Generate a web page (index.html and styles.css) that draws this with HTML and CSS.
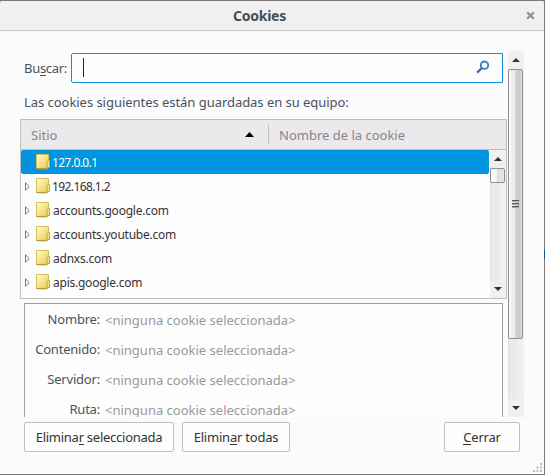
FILE: index.html
```
<!DOCTYPE html>
<html lang="es">
<head>
<meta charset="utf-8">
<title>Cookies</title>
<link rel="stylesheet" href="styles.css">
</head>
<body>
<svg width="0" height="0" class="defs">
  <defs>
    <linearGradient id="gold" x1="0" y1="0" x2="1" y2="1"><stop offset="0" stop-color="#fff9c8"/><stop offset=".5" stop-color="#f5e68e"/><stop offset="1" stop-color="#e3c650"/></linearGradient>
    <symbol id="folder" viewBox="0 0 15 17">
      <path d="M2 16.2H12" stroke="#bbb" stroke-opacity=".5"/>
      <path d="M11 7.500H13.500V14.500H11Z" fill="#f3df83" stroke="#c9aa3c"/>
      <path d="M.5 1.500H12.500V7L10.500 9V15.500H.5Z" fill="url(#gold)" stroke="#d6bd58"/>
      <path d="M.5 15.500H11.500" stroke="#b59a36"/>
    </symbol>
    <symbol id="twisty" viewBox="0 0 5 9"><path d="M.5 .8L4.300 4.500L.5 8.200Z" fill="none" stroke="currentColor"/></symbol>
  </defs>
</svg>
<div class="window">
  <header class="titlebar"><h1>Cookies</h1>
    <svg class="close" width="9" height="9" viewBox="0 0 9 9"><path d="M1.200 1.200L7.800 7.800M7.800 1.200L1.200 7.800" stroke="#8a929d" stroke-width="2.300"/></svg>
  </header>
  <main class="scroller">
    <div class="content">
      <div class="search"><label>Bu<u>s</u>car:</label>
        <div class="field"><i class="caret"></i>
          <svg width="14" height="14" viewBox="0 0 14 14"><circle cx="8.500" cy="5.200" r="3.700" fill="none" stroke="#3b82bb" stroke-width="1.900"/><path d="M5.800 8L1.200 12.600" stroke="#3c6eae" stroke-width="2.300"/></svg>
        </div>
      </div>
      <p class="intro">Las cookies siguientes están guardadas en su equipo:</p>
      <section class="list">
        <div class="head"><div class="col site"><span>Sitio</span><svg width="9" height="5" viewBox="0 0 9 5"><path d="M0 5L4.500 0L9 5Z"/></svg></div><div class="col name"><span>Nombre de la cookie</span></div></div>
        <div class="listbody">
          <div class="rows">
            <div class="row selected"><svg class="tw"><use href="#twisty"/></svg><svg class="fo"><use href="#folder"/></svg><span class="ip">127.0.0.1</span></div>
            <div class="row"><svg class="tw"><use href="#twisty"/></svg><svg class="fo"><use href="#folder"/></svg><span class="ip">192.168.1.2</span></div>
            <div class="row"><svg class="tw"><use href="#twisty"/></svg><svg class="fo"><use href="#folder"/></svg><span>accounts.google.com</span></div>
            <div class="row"><svg class="tw"><use href="#twisty"/></svg><svg class="fo"><use href="#folder"/></svg><span>accounts.youtube.com</span></div>
            <div class="row"><svg class="tw"><use href="#twisty"/></svg><svg class="fo"><use href="#folder"/></svg><span>adnxs.com</span></div>
            <div class="row"><svg class="tw"><use href="#twisty"/></svg><svg class="fo"><use href="#folder"/></svg><span>apis.google.com</span></div>
          </div>
          <div class="scrollbar inner"><div class="arrow"><svg width="8" height="4" viewBox="0 0 8 4"><path d="M0 4L4 0L8 4Z" fill="#333"/></svg></div><div class="thumb"></div><div class="track"></div><div class="arrow"><svg width="8" height="4" viewBox="0 0 8 4"><path d="M0 0L4 4L8 0Z" fill="#333"/></svg></div></div>
        </div>
      </section>
      <section class="details">
        <b>Nombre:</b><span>&lt;ninguna cookie seleccionada&gt;</span>
        <b>Contenido:</b><span>&lt;ninguna cookie seleccionada&gt;</span>
        <b>Servidor:</b><span>&lt;ninguna cookie seleccionada&gt;</span>
        <b>Ruta:</b><span>&lt;ninguna cookie seleccionada&gt;</span>
      </section>
    </div>
    <div class="scrollbar outer"><div class="arrow"><svg width="8" height="4" viewBox="0 0 8 4"><path d="M0 4L4 0L8 4Z" fill="#333"/></svg></div><div class="thumb"><i></i><i></i><i></i></div><div class="track"></div><div class="arrow"><svg width="8" height="4" viewBox="0 0 8 4"><path d="M0 0L4 4L8 0Z" fill="#333"/></svg></div></div>
  </main>
  <footer class="actions">
    <button class="b1"><span>Elimina<u>r</u> seleccionada</span></button><button class="b2"><span>Elimin<u>a</u>r todas</span></button><button class="b3"><span><u>C</u>errar</span></button>
  </footer>
  <svg class="grip" width="10" height="10" viewBox="0 0 10 10" fill="#bbb"><path d="M7 0h2v2H7zM7 3.500h2v2H7zM7 7h2v2H7zM3.500 3.500h2v2h-2zM3.500 7h2v2h-2zM0 7h2v2H0z"/></svg>
</div>
<i class="edge"></i>
</body>
</html>
```
FILE: styles.css
```
* { box-sizing: border-box; }
body { margin: 0; background: #777; font: 13px/20px "Noto Sans", "Open Sans", sans-serif; color: #4a5260; }
svg { display: block; flex: none; }
.defs { position: absolute; }
span, label, p, b, h1 { white-space: nowrap; }
u { text-decoration: none; box-shadow: inset 0 -1px currentColor; display: inline-block; line-height: 16px; }
.window { position: relative; width: 545px; height: 475px; border: solid #7d7a7c; border-width: 1px 1px 1px 0; border-radius: 3px 3px 0 0; background: #fbfbfb; display: flex; flex-direction: column; overflow: hidden; }
.titlebar { height: 30px; flex: none; background: #f0f0f0; border-bottom: 1px solid #c4c4c4; display: flex; align-items: center; padding: 0 9px 0 233px; justify-content: space-between; }
h1 { margin: 0; font-size: 14px; line-height: 20px; letter-spacing: -.25px; color: #464c5c; }
.scroller { margin: 20px 20px 0; height: 366px; display: flex; overflow: hidden; }
.content { width: 488px; flex: none; padding-top: 2px; }
.search { display: flex; align-items: center; padding-left: 4px; height: 30px; }
.search label { width: 47px; letter-spacing: -.3px; }
.field { width: 432px; height: 30px; background: #fdfdfd; border: 1px solid #0f91dc; border-radius: 2px 0 0 2px; display: flex; align-items: center; justify-content: space-between; padding: 0 12px 2px 11px; }
.caret { width: 1px; height: 19px; background: #222; }
.intro { margin: 9px 0 7px 4px; height: 20px; letter-spacing: -.04px; }
.list { width: 487px; height: 180px; border: 1px solid #bebebe; background: #fdfdfd; }
.head { height: 30px; background: #ebe9eb; border-bottom: 1px solid #bebebe; display: flex; align-items: center; color: #85868b; }
.head span { margin-top: 1px; }
.col { display: flex; align-items: center; height: 19px; }
.site { width: 248px; border-right: 1px solid #bebebe; justify-content: space-between; padding: 0 14px 0 10px; }
.site svg { fill: #000; }
.name { padding-left: 10px; }
.listbody { display: flex; height: 148px; }
.rows { width: 468px; margin-right: 1px; }
.row { height: 24px; display: flex; align-items: center; padding-left: 4px; font-size: 12px; letter-spacing: -.24px; color: #333; border-radius: 2px; }
.row span { margin-top: 2px; }
.selected { background: #0095de; color: #fff; }
.tw { width: 5px; height: 9px; margin: 1px 6px 0 0; color: #777; }
.selected .tw { color: #4d6f86; }
.fo { width: 15px; height: 17px; margin: -2px 2px 0 0; }
.row .ip { letter-spacing: -.6px; margin-left: -1px; }
.scrollbar { display: flex; flex-direction: column; flex: none; width: 16px; background: linear-gradient(90deg, #e2e2e2, #ececec 20%, #e8e8e8 48%, #f4f4f4 50%, #ededed 54%, #f3f3f3); }
.arrow { height: 18px; display: flex; justify-content: center; align-items: center; flex: none; background: #f0f0f0; }
.thumb { width: 15px; border: 1px solid #8f8f8f; border-radius: 2px; background: linear-gradient(90deg, #fdf8f7 0 15%, #ececed 20% 42%, #d2d2d8 50%, #c7c7cd 80%, #ddd); display: flex; flex-direction: column; align-items: center; justify-content: center; gap: 1px; }
.thumb i { width: 7px; height: 2px; background: #555; border-bottom: 1px solid #aaa; }
.inner .thumb { height: 15px; background: linear-gradient(90deg, #fafafa 0 40%, #dcdce2 50%, #e6e6ea); }
.outer .thumb { height: 270px; }
.track { flex: 1; }
.details { margin: 4px 0 0 4px; width: 479px; height: 130px; border: 1px solid #a0a0a0; background: #fdfdfd; display: grid; grid-template-columns: 75px auto; grid-auto-rows: 30px; column-gap: 5px; padding-top: 6px; justify-content: start; }
.details b { font-weight: 400; justify-self: end; letter-spacing: -.2px; line-height: 19px; }
.details span { color: #999; line-height: 20px; }
.actions { display: flex; margin: 5px 24px 0; }
button { height: 30px; padding: 0; border: 1px solid #c0c0c0; border-radius: 2px; background: #fdfdfd; font: inherit; color: #333; }
.b1 { width: 150px; margin-right: 8px; letter-spacing: -.26px; }
.b2 { width: 108px; letter-spacing: -.22px; }
.b3 { width: 76px; margin-left: auto; letter-spacing: -.2px; }
.grip { position: absolute; right: 1px; bottom: 1px; }
.edge { position: absolute; left: 544px; top: 250px; width: 1px; height: 9px; background: #17548d; }
```
